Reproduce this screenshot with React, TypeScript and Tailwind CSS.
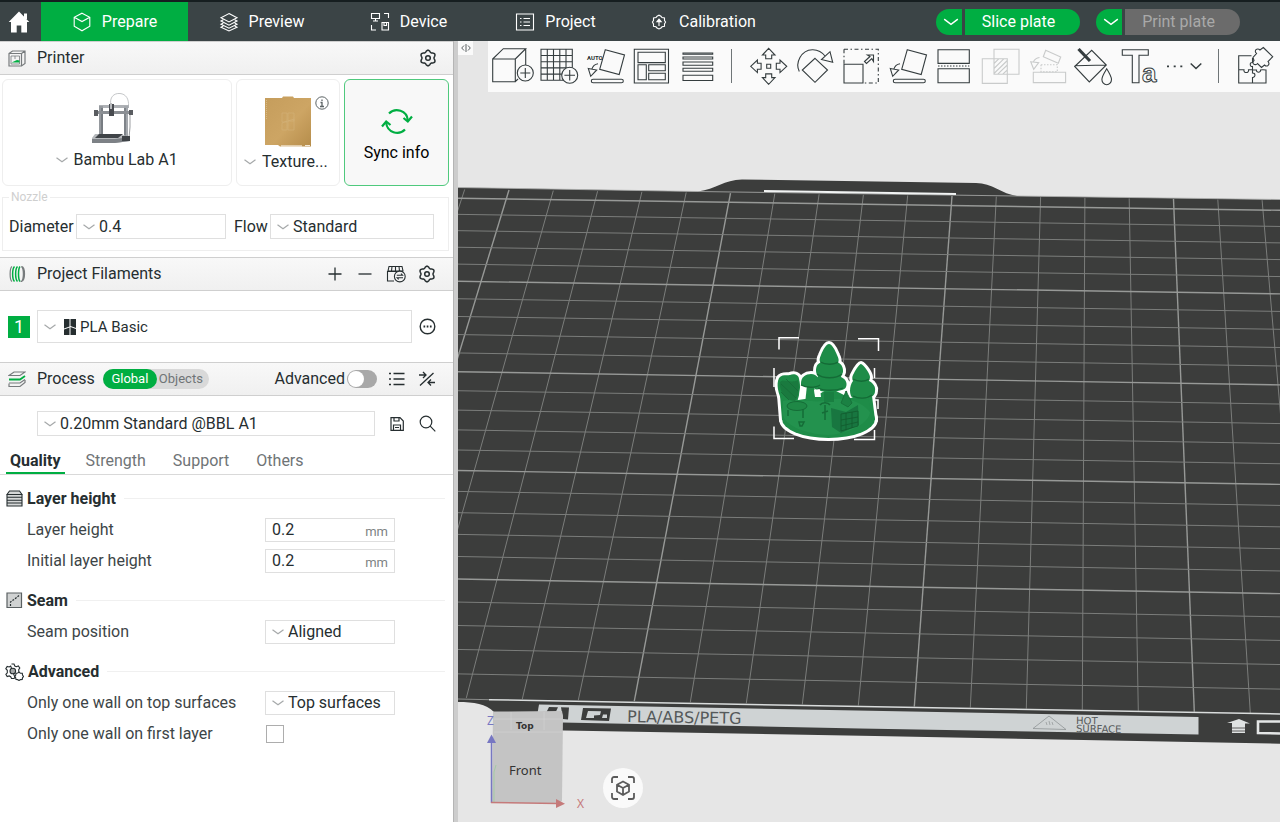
import type { ReactNode } from 'react';

const INK = '#262e30';

function Chevron({ className = 'text-[#a6a9aa]' }: { className?: string }) {
  return (
    <svg width="12" height="6" viewBox="0 0 12 6" fill="none" stroke="currentColor" className={`shrink-0 ${className}`}>
      <path d="M.5 .7 6 4.8 11.5 .7" strokeWidth="1.2" />
    </svg>
  );
}

// Drop-down with the arrow on the left side of its value.
function Dropdown({ id, value, className, icon, small }: { id: string; value: string; className: string; icon?: ReactNode; small?: boolean }) {
  return (
    <div className={`flex items-center gap-1 border border-[#dfdfdf] bg-white pl-1.5 ${className}`}>
      <Chevron />
      <div className="flex min-w-0 flex-1 items-center gap-1">
        {icon}
        <select id={id} aria-label={value} className={`min-w-0 flex-1 appearance-none bg-transparent outline-none ${small ? 'text-[15px]' : ''}`}>
          <option>{value}</option>
        </select>
      </div>
    </div>
  );
}

// Six-lobed gear outline.
const gearPoints = Array.from({ length: 72 }, (_, i) => {
  const a = (i * Math.PI) / 36;
  const r = 6.9 - 0.9 * Math.cos(6 * a);
  return `${(9 + r * Math.cos(a)).toFixed(2)},${(9 + r * Math.sin(a)).toFixed(2)}`;
}).join(' ');

function GearIcon() {
  return (
    <svg width="18" height="18" viewBox="0 0 18 18" fill="none" stroke={INK} strokeWidth="1.5" strokeLinejoin="round">
      <polygon points={gearPoints} />
      <circle cx="9" cy="9" r="2.3" />
    </svg>
  );
}

function SectionHeader({ icon, title, children }: { icon: ReactNode; title: string; children?: ReactNode }) {
  return (
    <div className="flex h-[34px] items-center border-y border-[#cfcfcf] bg-gradient-to-b from-[#f8f8f8] to-[#f0f0f0] pl-2">
      <span className="w-[29px]">{icon}</span>
      <h2>{title}</h2>
      {children}
    </div>
  );
}

const navTabs = [
  {
    label: 'Prepare',
    icon: <path d="M10 1.2 17.8 5.3V14.3L10 18.8 2.2 14.3V5.3ZM2.2 5.3 10 9.6 17.8 5.3" />,
  },
  {
    label: 'Preview',
    icon: <path d="M10 1.5 18 5.7 10 9.9 2 5.7ZM4.3 7.8 2 9 10 13.2 18 9 15.7 7.8M4.3 11 2 12.2 10 16.2 18 12.2 15.7 11M4.3 14 2 15.2 10 19 18 15.2 15.7 14" />,
  },
  {
    label: 'Device',
    icon: <path d="M1.5 1.5H9.5V6.5H1.5ZM5.5 6.5V9M3 9H8M14 1.5H18.5V6M1.5 13V18H6M12 10.5H18.5V18H12ZM14 10.5V13.5H16.5V10.5" />,
  },
  {
    label: 'Project',
    icon: <path d="M1.5 2H18.5V18H1.5ZM5 6.5H6.5M8.5 6.5H15M5 10H6.5M8.5 10H15M5 13.5H6.5M8.5 13.5H15" />,
  },
  {
    label: 'Calibration',
    icon: (
      <>
        <path d="M8 4.3 10 3.2 12 4.3 13 5.5 15.5 6V8.5L16.6 10 15.5 12V14.3L13 14.8 12 16 10 17 8 16 7 14.8 4.5 14.3V12L3.4 10 4.5 8.5V6L7 5.5Z" />
        <path d="M10 14V8.5M7.8 9.8 10 7.2 12.2 9.8Z" fill="currentColor" />
      </>
    ),
  },
];

function TopBar() {
  return (
    <header className="flex h-[41px] items-stretch border-t-2 border-[#161e20] bg-[#3b4446] text-white">
      <button aria-label="Home" className="flex w-[41px] items-center justify-center pr-1">
        <svg width="22" height="22" viewBox="0 0 22 22" fill="currentColor">
          <path d="M11 .5 21.3 11H19V21.5H13.3V14.5H8.7V21.5H3V11H.7Z" />
          <path d="M16 2.5H19V8H16Z" />
        </svg>
      </button>
      <nav className="flex">
        {navTabs.map((tab, i) => (
          <button key={tab.label} className={`flex w-[147px] items-center justify-center gap-2.5 ${i === 0 ? 'bg-[#00ae42]' : ''}`}>
            <svg width="20" height="20" viewBox="0 0 20 20" fill="none" stroke="currentColor" strokeWidth="1.1">
              {tab.icon}
            </svg>
            {tab.label}
          </button>
        ))}
      </nav>
      <div className="ml-auto flex items-center gap-4 pr-10">
        <div className="flex gap-[3px]">
          <button aria-label="Slice options" className="flex h-[26px] w-[26px] items-center justify-center rounded-l-full bg-[#00ae42] pl-1">
            <Chevron className="scale-125 text-white" />
          </button>
          <button className="h-[26px] w-[115px] rounded-r-full bg-[#00ae42] pr-2">Slice plate</button>
        </div>
        <div className="flex gap-[3px]">
          <button aria-label="Print options" className="flex h-[26px] w-[26px] items-center justify-center rounded-l-full bg-[#00ae42] pl-1">
            <Chevron className="scale-125 text-white" />
          </button>
          <button className="h-[26px] w-[115px] rounded-r-full bg-[#6b6b6b] pr-2 text-[#a9a9a9]">Print plate</button>
        </div>
      </div>
    </header>
  );
}

function PrinterPicture() {
  return (
    <svg width="44" height="52" viewBox="0 0 44 52" fill="none">
      <path d="M20 14C18 5 23 1 29 1.500C35 2 38 7 37.500 14" stroke="#c5c7c9" />
      <path d="M39 18V35L38 46" stroke="#9b9ea1" />
      <path d="M8 13H38V16H8Z" fill="#aeb1b5" />
      <path d="M8 14H12V45H8Z" fill="#95999e" />
      <path d="M33 14H37V46H33Z" fill="#a4a8ad" />
      <path d="M11 16V45M34 16V46" stroke="#5b6066" />
      <path d="M5 19H41V22H5Z" fill="#8b8f94" />
      <path d="M3 18H7V24H3ZM38 18H42V23H38Z" fill="#5a5d61" />
      <path d="M18 12H23V24H18Z" fill="#484b50" />
      <path d="M19 11H21V17H19Z" fill="#b8babd" />
      <path d="M4 42H29L39 45V49L24 51H1V46Z" fill="#b6b9bc" />
      <path d="M1 47H24L39 45V49L24 51H1Z" fill="#7d8186" />
      <path d="M8 42H32L27 46H4Z" fill="#404448" />
      <path d="M31 44H39V49H31Z" fill="#3f4347" />
    </svg>
  );
}

function PlatePicture() {
  return (
    <svg width="48" height="52" viewBox="0 0 48 52" fill="none">
      <defs>
        <linearGradient id="gold" x1="0" y1="0" x2="1" y2="1">
          <stop offset="0" stopColor="#c59d5c" />
          <stop offset=".55" stopColor="#cda564" />
          <stop offset="1" stopColor="#b68d4b" />
        </linearGradient>
      </defs>
      <path d="M1 2H18L19 .500H29L30 2H47V50.500H16L14 49H1Z" fill="url(#gold)" />
      <path d="M17 50H38" stroke="#f4ead8" strokeWidth="1.300" />
      <path d="M41 49.500H46" stroke="#f4ead8" />
      <path d="M18 17H23V26H18ZM24 17H30V25H24ZM18 27 23 25V34H18ZM24 25 30 23V34H24Z" stroke="#d3b27a" strokeWidth=".6" />
      <path d="M2.500 4V24" stroke="#dcc08d" strokeWidth=".8" strokeDasharray="1 1" />
    </svg>
  );
}

function PrinterSection() {
  return (
    <section>
      <SectionHeader
        title="Printer"
        icon={
          <svg width="18" height="17" viewBox="0 0 18 17" fill="none" stroke="#777b7d" strokeWidth="1.2">
            <path d="M1 3.500 4.500 1H17V13.500L13.500 16H1ZM1 3.500H13.500V16M13.500 3.500 17 1" />
            <path d="M3 6H11.500V14H3ZM7 6V9" strokeWidth=".8" />
            <path d="M3.500 12.500 9 10 11.500 10.500V12.500Z" fill="#00ae42" stroke="none" />
          </svg>
        }
      >
        <button aria-label="Printer settings" className="ml-auto mr-4"><GearIcon /></button>
      </SectionHeader>
      <div className="flex gap-1 px-0.5 pt-1 pr-1">
        <div className="flex h-[107px] flex-1 flex-col items-center rounded-md border border-[#eee] pt-3">
          <div className="pr-2"><PrinterPicture /></div>
          <div className="flex items-center gap-1.5 pt-1.5">
            <Chevron />
            <select aria-label="Printer model" className="appearance-none bg-transparent outline-none">
              <option>Bambu Lab A1</option>
            </select>
          </div>
        </div>
        <div className="relative flex h-[107px] w-[104px] flex-col items-center rounded-md border border-[#eee] pt-4">
          <PlatePicture />
          <button aria-label="Plate information" className="absolute right-2.5 top-4">
            <svg width="14" height="14" viewBox="0 0 14 14" fill="none" stroke="#5c6365">
              <circle cx="7" cy="7" r="6.200" />
              <path d="M7 3.500V5M5.500 6.500H7V10.500M5 10.500H9" strokeWidth="1.300" />
            </svg>
          </button>
          <div className="flex items-center gap-1.5 pr-1 pt-1">
            <Chevron />
            <select aria-label="Plate type" className="appearance-none bg-transparent outline-none">
              <option>Texture...</option>
            </select>
          </div>
        </div>
        <button className="flex h-[107px] w-[105px] flex-col items-center rounded-md border border-[#4fc97d] bg-[#f8f8f8] pt-7 text-black">
          <svg width="32" height="27" viewBox="0 0 32 27" fill="none" stroke="#00ae42" strokeWidth="2.200">
            <path d="M8 5.500A11 11 0 0 1 26.800 12M24 21.500A11 11 0 0 1 5.200 15" />
            <path d="M22.500 10 26.800 13.500 31 8.500M1 18.500 5.200 13.500 9.500 17" />
          </svg>
          <span className="pt-2">Sync info</span>
        </button>
      </div>
      <fieldset className="ml-0.5 mr-1 mt-[5px] flex h-[60px] items-center border border-[#eee] pl-1.5">
        <legend className="px-0.5 text-[12px] leading-3 text-[#cfcfcf]">Nozzle</legend>
        <label htmlFor="diameter" className="w-[67px]">Diameter</label>
        <Dropdown id="diameter" value="0.4" className="h-[25px] w-[150px]" />
        <label htmlFor="flow" className="ml-2 w-[36px]">Flow</label>
        <Dropdown id="flow" value="Standard" className="h-[25px] w-[164px]" />
      </fieldset>
    </section>
  );
}

function FilamentSection() {
  return (
    <section className="pt-1.5">
      <SectionHeader
        title="Project Filaments"
        icon={
          <svg width="18" height="18" viewBox="0 0 18 18" fill="none" strokeWidth="1.200">
            <path d="M4 1.500C1.500 3 1.500 15 4 16.500M13.500 1.500C17.500 1.500 17.500 16.500 13.500 16.500C16 14 16 4 13.500 1.500" stroke="#777b7d" />
            <path d="M6.500 1.500C4 4 4 14 6.500 16.500M9.500 1.500C7 4 7 14 9.500 16.500M12 1.500C10 4 10 14 12 16.500" stroke="#00ae42" strokeWidth="1.500" />
          </svg>
        }
      >
        <div className="ml-auto mr-[17px] flex items-center gap-3.5">
          <button aria-label="Add filament">
            <svg width="14" height="14" viewBox="0 0 14 14" stroke={INK} strokeWidth="1.300"><path d="M7 .5V13.500M.5 7H13.500" /></svg>
          </button>
          <button aria-label="Remove filament" className="ml-0.5">
            <svg width="14" height="14" viewBox="0 0 14 14" stroke={INK} strokeWidth="1.300"><path d="M.5 7H13.500" /></svg>
          </button>
          <button aria-label="Sync filaments">
            <svg width="20" height="18" viewBox="0 0 20 18" fill="none" stroke={INK} strokeWidth="1.100">
              <path d="M3 1.500H16L17 6H2ZM6 1.500 5.500 6M9.500 1.500V6M13 1.500 13.500 6M1.500 6V16H8M1.500 6.500H17" />
              <circle cx="13.800" cy="11.500" r="5.400" fill="#f4f4f4" />
              <path d="M10.800 10.200H16.500L15 8.700M17 12.800H11.200L12.700 14.300" />
            </svg>
          </button>
          <button aria-label="Filament settings" className="-ml-0.5"><GearIcon /></button>
        </div>
      </SectionHeader>
      <div className="flex items-center pb-[19px] pl-2 pr-[17px] pt-[19px]">
        <button className="h-[22px] w-[22px] bg-[#00ae42] text-[18px] text-white">1</button>
        <Dropdown
          id="filament"
          value="PLA Basic"
          small
          className="ml-[7px] h-[33px] flex-1"
          icon={
            <svg width="12" height="16" viewBox="0 0 12 16" fill={INK} className="ml-1 shrink-0">
              <path d="M0 0H5.500V7.500L0 9.500ZM6.500 0H12V9L6.500 7ZM0 10.500 5.500 8.500V16H0ZM6.500 8 12 10V16H6.500Z" />
            </svg>
          }
        />
        <button aria-label="Filament options" className="ml-[7px]">
          <svg width="17" height="17" viewBox="0 0 17 17" fill="none" stroke={INK}>
            <circle cx="8.500" cy="8.500" r="7.300" strokeWidth="1.400" />
            <path d="M4.500 8.500H6.200M7.700 8.500H9.400M10.900 8.500H12.600" strokeWidth="1.800" />
          </svg>
        </button>
      </div>
    </section>
  );
}

function ProcessSection() {
  return (
    <section>
      <SectionHeader
        title="Process"
        icon={
          <svg width="18" height="17" viewBox="0 0 18 17" fill="none" stroke="#777b7d" strokeWidth="1.200">
            <path d="M1 4.500 6 1H17L12 4.500ZM1 12.500V15.500H12L17 11.500V9" />
            <path d="M1 8.500H12L17 5" stroke="#00ae42" strokeWidth="1.800" />
            <path d="M1 12H12L17 8.500" />
          </svg>
        }
      >
        <div className="ml-2 flex h-5 items-center rounded-full bg-[#d9d9d9] pr-1 text-[13px]">
          <button className="h-5 w-[54px] rounded-full bg-[#00ae42] text-white">Global</button>
          <button className="px-0.5 text-[#6f7476]">Objects</button>
        </div>
        <div className="ml-auto mr-[18px] flex items-center">
          <label htmlFor="advanced">Advanced</label>
          <input
            id="advanced"
            type="checkbox"
            role="switch"
            className="ml-0.5 h-[18px] w-[30px] appearance-none rounded-full bg-[#a8a8a8] p-px before:block before:h-4 before:w-4 before:rounded-full before:bg-white"
          />
          <button aria-label="Parameter list" className="ml-3">
            <svg width="16" height="14" viewBox="0 0 16 14" stroke={INK} strokeWidth="1.300">
              <path d="M0 1.500H2M4.500 1.500H15.500M0 7H2M4.500 7H15.500M0 12.500H2M4.500 12.500H15.500" />
            </svg>
          </button>
          <button aria-label="Compare presets" className="ml-3.5">
            <svg width="16" height="16" viewBox="0 0 16 16" fill="none" stroke={INK} strokeWidth="1.300">
              <path d="M1 14.500 14.500 2M0 4H6.500M4 1 7 4 4 7M16 11.500H9.500M12 8.500 9 11.500 12 14.500" />
            </svg>
          </button>
        </div>
      </SectionHeader>
      <div className="flex items-center pl-[37px] pr-[17px] pt-[15px]">
        <Dropdown id="preset" value="0.20mm Standard @BBL A1" className="h-[25px] flex-1" />
        <button aria-label="Save preset" className="ml-[15px]">
          <svg width="14" height="14" viewBox="0 0 14 14" fill="none" stroke={INK} strokeWidth="1.200">
            <path d="M1 .7H10L13.300 4V13.300H1ZM4 .7V4H9V.7M3.500 13V8H10.500V13M5 10.500H9" />
          </svg>
        </button>
        <button aria-label="Search" className="ml-[15px]">
          <svg width="17" height="17" viewBox="0 0 17 17" fill="none" stroke={INK} strokeWidth="1.200">
            <circle cx="7" cy="7" r="5.800" />
            <path d="M11.200 11.200 16.300 16.300" />
          </svg>
        </button>
      </div>
      <nav className="mt-2.5 flex h-[29px] gap-[21px] border-b border-[#d9d9d9] pl-1.5 text-[#6f7476]">
        <button className="border-b-2 border-[#00ae42] px-1 pt-1 font-bold text-[#262e30]">Quality</button>
        <button className="pt-0.5">Strength</button>
        <button className="ml-1.5 pt-0.5">Support</button>
        <button className="ml-1.5 pt-0.5">Others</button>
      </nav>
    </section>
  );
}

function OptionGroup({ title, icon, children }: { title: string; icon: ReactNode; children: ReactNode }) {
  return (
    <section>
      <div className="flex h-[31px] items-center gap-1">
        {icon}
        <h3 className="font-bold">{title}</h3>
        <hr className="ml-1 flex-1 border-[#f0f0f0]" />
      </div>
      {children}
    </section>
  );
}

function OptionRow({ id, label, children }: { id: string; label: string; children: ReactNode }) {
  return (
    <div className="flex h-[31px] items-center pl-[21px]">
      <label htmlFor={id} className="w-[238px] text-[#3d4547]">{label}</label>
      {children}
    </div>
  );
}

function LengthField({ id }: { id: string }) {
  return (
    <div className="flex h-6 w-[130px] items-center border border-[#dfdfdf] px-1.5">
      <input id={id} defaultValue="0.2" className="w-0 min-w-0 flex-1 outline-none" />
      <span className="pt-1 text-[13px] text-[#7d8284]">mm</span>
    </div>
  );
}

function QualityOptions() {
  return (
    <div className="flex flex-col gap-[9px] pl-1.5 pr-2 pt-2">
      <OptionGroup
        title="Layer height"
        icon={
          <svg width="17" height="17" viewBox="0 0 17 17" fill="#d5d7d7" stroke={INK} strokeWidth="1.100">
            <path d="M3.500 1H13.500L16 4.500H1ZM1 4.500H16V7.300H1ZM1 7.300H16V10.200H1ZM1 10.200H16V13H1ZM1 13H16V16H1Z" />
          </svg>
        }
      >
        <OptionRow id="layer" label="Layer height"><LengthField id="layer" /></OptionRow>
        <OptionRow id="initial" label="Initial layer height"><LengthField id="initial" /></OptionRow>
      </OptionGroup>
      <OptionGroup
        title="Seam"
        icon={
          <svg width="17" height="17" viewBox="0 0 17 17" fill="#d0d2d2" stroke="#5a6062" strokeWidth="1.200">
            <path d="M1 1H15.500V15.500H1Z" />
            <path d="M4.500 14V10L8 7.500 13 3.500" fill="none" stroke={INK} strokeDasharray="2 1.200" />
          </svg>
        }
      >
        <OptionRow id="seam" label="Seam position"><Dropdown id="seam" value="Aligned" className="h-6 w-[130px]" /></OptionRow>
      </OptionGroup>
      <OptionGroup
        title="Advanced"
        icon={
          <svg width="19" height="18" viewBox="0 0 19 18" fill="none" stroke={INK} strokeWidth="1.100" className="-ml-px">
            <path d="M6.500 1H9L9.800 3 11.300 3.700 13.300 3 14.800 5 13.700 6.700V8.300L14.500 9.500M10 14.500 9 15.500H6.500L5.700 13.700 4.200 12.900 2.200 13.500 .9 11.300 2.300 9.800V7.300L.8 5.700 2.200 3.500 4.200 4 5.700 3Z" />
            <circle cx="7.800" cy="8" r="2.800" fill="#a5a8a9" />
            <path d="M12.500 10 14 9.300 15.500 10.200 17.300 10.300 17.500 12 18.500 13.500 17.500 14.800 17.200 16.500 15.500 16.600 14 17.500 12.500 16.600 10.900 16.300 10.700 14.700 9.800 13.300 10.800 12 10.900 10.400Z" fill="#fff" />
          </svg>
        }
      >
        <OptionRow id="top-wall" label="Only one wall on top surfaces">
          <Dropdown id="top-wall" value="Top surfaces" className="h-6 w-[130px]" />
        </OptionRow>
        <OptionRow id="first-wall" label="Only one wall on first layer">
          <input id="first-wall" type="checkbox" className="ml-px h-[18px] w-[18px] appearance-none border border-[#adadad] bg-white" />
        </OptionRow>
      </OptionGroup>
    </div>
  );
}

const cubeAdd = (
  <>
    <path d="M1.700 13H24.300V35.700H1.700ZM1.700 13 12.300 2.700H34.700L24.300 13M34.700 2.700V19M24.300 35.700 27 33" />
    <circle cx="34.300" cy="27" r="8" />
    <path d="M34.300 22V32M29.300 27H39.300" />
  </>
);

const gridAdd = (
  <>
    <path d="M4 3.300H35.300V34.300H4ZM10.300 3.300V34.300M16.500 3.300V34.300M22.800 3.300V34.300M29 3.300V34.300M4 9.500H35.300M4 15.700H35.300M4 21.900H35.300M4 28.100H35.300" />
    <circle cx="32.700" cy="29.300" r="8" fill="#fafafa" />
    <path d="M32.700 24V34.600M27.400 29.300H38" />
  </>
);

const layFlat = (
  <>
    <path d="M22.300 3.700 41.500 9 36.200 28.500 16.700 23.300Z" />
    <rect x="8.300" y="33.200" width="32" height="3.600" rx="1.800" />
    <path d="M5.300 22.500 13.700 24 7.700 30.300ZM9 22.800C9.700 20.500 11.500 18.500 15 17.800" />
  </>
);

const arrowUp = 'M21.700 2.300 28 9H24.700V12.700H18.700V9H15.400Z';

const leftTools = [
  { name: 'Add model', art: cubeAdd },
  { name: 'Add plate', art: gridAdd },
  {
    name: 'Auto orient',
    art: (
      <>
        {layFlat}
        <text x="4" y="13.500" fontSize="6" fontWeight="700" fill={INK} stroke="none">AUTO</text>
      </>
    ),
  },
  {
    name: 'Arrange',
    art: <path d="M5.300 3.300H39.500V37H5.300ZM9 6.300H36.300V16.600H9ZM9 18.700H17.300V33.700H9ZM19.700 18.700H36.300V24.700H19.700ZM19.700 27.300H36.300V33.700H19.700Z" />,
  },
  {
    name: 'Variable layer height',
    art: <path d="M8 7H37.700V8.200H8ZM8 11H37.700V13H8ZM8 16H37.700V19.300H8ZM8 22.300H37.700V25.300H8ZM8 29.300H37.700V34.500H8Z" />,
  },
];

const rightTools = [
  {
    name: 'Move',
    art: (
      <>
        <path d="M19.700 18.300H23.700V22.300H19.700Z" />
        <path d={arrowUp} />
        <path d={arrowUp} transform="rotate(90 21.700 20.300)" />
        <path d={arrowUp} transform="rotate(180 21.700 20.300)" />
        <path d={arrowUp} transform="rotate(270 21.700 20.300)" />
      </>
    ),
  },
  {
    name: 'Rotate',
    art: <path d="M22 12.300 34.500 24 22 36.300 9.300 24ZM6.300 25.500C2 17 8 4 19.300 3.700C25 3.500 29.500 6.500 32.500 10.500M28.500 13.500 39.700 16.300 37 5.700Z" />,
  },
  {
    name: 'Scale',
    art: (
      <>
        <path d="M5 3.300H39.300V37H24M5 3.300V18" strokeDasharray="4 2.500 1.500 2.500" />
        <path d="M5 18.300H24V37H5ZM25.500 15.500 31 10.500 28.500 9H34.500V15.500L32.800 12.700 27.500 17.500Z" />
      </>
    ),
  },
  { name: 'Place on face', art: layFlat },
  {
    name: 'Cut',
    art: (
      <>
        <path d="M7 3.700H38.300V17.400H7ZM7 22.700H38.300V36.700H7Z" />
        <path d="M7 20H38.300" strokeDasharray="1.500 1.500" />
      </>
    ),
  },
  {
    name: 'Mesh boolean',
    off: true,
    art: <path d="M5.300 12.700H30.300V37.400H5.300ZM17 3.300H42V28.300H17ZM17 17.500 22 12.700M17 22.500 27 12.700M17 27.500 30.300 14.500M20.500 28.300 30.300 19M25.500 28.300 30.300 24" />,
  },
  {
    name: 'Supports',
    off: true,
    art: (
      <>
        <path d="M10.300 26.300H42.600V36.600H10.300ZM22.700 4.300 37.700 11 35.300 17.300 20.300 10.700ZM7.700 15.700 15.700 16.700 10.700 23.300ZM10.500 15.700C11.500 13.500 13.500 12 16.500 11.500" />
        <path d="M18 18.700H34.300V25.700H18Z" strokeDasharray="1.500 1.500" />
      </>
    ),
  },
  {
    name: 'Color painting',
    art: (
      <>
        <path d="M5.700 20.500 22.700 4.300 37.300 19 20.300 36ZM5.700 19.800 37.300 19M37.700 22.700C34.500 28 32.900 30.500 32.900 33.500A4.800 5.200 0 0 0 42.500 33.500C42.500 30.500 41 28 37.700 22.700Z" />
        <path d="M9.500 3 21 15" strokeWidth="3.200" />
      </>
    ),
  },
  {
    name: 'Text',
    art: (
      <>
        <path d="M7.300 3.700H33.300V9.300H24V36.700H17.300V9.300H7.300Z" />
        <text x="27" y="36" fontSize="26" fontWeight="700" strokeWidth="1" fontFamily="Liberation Sans">a</text>
      </>
    ),
  },
  {
    name: 'More tools',
    art: (
      <>
        <path d="M6 20.300H8M12.700 20.300H14.700M19.300 20.300H21.300" strokeWidth="1.800" />
        <path d="M29.700 17.500 35 22.500 40.300 17.500" strokeWidth="1.500" />
      </>
    ),
  },
];

function Tool({ name, art, off }: { name: string; art: ReactNode; off?: boolean }) {
  return (
    <button aria-label={name} disabled={off} className={`flex w-[46px] justify-center ${off ? 'text-[#c9cbcb]' : 'text-[#353d3f]'}`}>
      <svg width="44" height="42" viewBox="0 -1 44 42" fill="none" stroke="currentColor" strokeWidth="1.100" className="overflow-visible">
        {art}
      </svg>
    </button>
  );
}

function Toolbar() {
  return (
    <div className="relative flex items-start">
      <button aria-label="Collapse sidebar" className="flex h-[14px] w-[15px] items-center justify-center bg-[#fafafa]">
        <svg width="10" height="8" viewBox="0 0 10 8" fill="none" stroke="#5a6062">
          <path d="M3 1.500 .7 4 3 6.500M5 0V8M7 1.500 9.300 4 7 6.500" />
        </svg>
      </button>
      <div className="ml-[15px] flex h-[51px] flex-1 items-center bg-[#fafafa] pb-px pl-0.5">
        {leftTools.map((t) => <Tool key={t.name} {...t} />)}
        <span className="ml-[11px] mr-[14px] h-[34px] w-px shrink-0 bg-[#6f7577]" />
        {rightTools.map((t) => <Tool key={t.name} {...t} />)}
        <span className="ml-3 mr-[13px] h-[34px] w-px shrink-0 bg-[#6f7577]" />
        <Tool
          name="Assembly"
          art={
            <>
              <path d="M18.500 9.700H5.700V37H33V24C30 23.500 29 23.500 27.500 24C28 27 23 27 23.500 24H19.500V20.500C16.500 21 16.500 16 19.500 16.500V12M5.700 23.700H11C10 27.500 16.500 27.500 15.500 23.700H19.500V27C22.500 26.500 23 31.500 19.500 31.500V37" />
              <path d="M30.300 1.500 39.700 10.700 35 15.500C37.500 18.500 34 21.500 31.500 19L28.500 21.500 24.500 17.500C22 20.500 18 17 21 14.500L20 11.300 23.500 7.500C20.500 5 24 1 27 4Z" />
            </>
          }
        />
      </div>
    </div>
  );
}

// Bed grid: each line is kept as its two end points after perspective.
const columns = Array.from({ length: 22 }, (_, k) => {
  const i = k - 13;
  const top = 952 + 44.3 * i;
  const bottom = 914.3 + 56 * i;
  return { x1: top, y1: 196 + (top - 952) * 0.0135, x2: bottom, y2: 706.5 + (bottom - 914) * 0.019, major: i % 5 === 0 };
});

const rows = Array.from({ length: 25 }, (_, n) => {
  const depth = 1 - 0.0082 * n;
  return { y1: (198.3 + 14.29 * n) / depth, y2: (210.3 + 14.3 * n) / depth, major: n % 5 === 0 };
});

function ModelShape() {
  return (
    <>
      <ellipse cx="828.500" cy="419" rx="46.500" ry="19" />
      <path d="M780 395 798 400 812 398 830 388 850 398 872 396 875 420H782Z" />
      <path d="M829 344C832 344 835 350 837 355C839 359 839 361 838 362.500C842 364 843.500 369 843 372C842 375 841 376 841 377C846 379 848 384 845.500 388C840 393 818 393 814 388C812 384 813 379 818 377C818 376 816 374 816 371C816 367 817 364 820.500 362.500C819 361 819.500 358 821 355C823 350 826 344 829 344Z" />
      <path d="M779 378C782 374 787 376 790 375C794 373 799 375 799 379C801 386 800 394 797 402H783C778 394 776 384 779 378Z" />
      <path d="M801 383C801 377 806 374 811 374C817 374 821 380 820 385C816 388 806 388 801 385Z" />
      <path d="M807 385H814L816 404H805Z" />
      <path d="M861 364C864 365 870 374 870 377C870 379 869 380 869 381C873 383 876 387 875 391C875 395 872 397 868 398C869 403 871 409 869 415H852L853 398C849 396 849 386 853 381C852 379 852 377 853 375C855 371 859 364 861 364Z" />
    </>
  );
}

function BedScene() {
  return (
    <svg className="absolute inset-0 h-full w-full" viewBox="458 41 822 781" preserveAspectRatio="xMinYMin slice" fill="none">
      <path d="M458 187.500 698 191.500C716 189 724 180 742 179.500L976 183C992 183 1002 194 1017 196L1280 199.500V743.700L875 736 536 730 494 712C486 704 474 702 458 702Z" fill="#3c3d3c" />
      <path d="M458 187.500 698 191.500 1017 196 1280 199.500" stroke="#aeb0ae" strokeWidth=".8" />
      <path d="M764 191 956 194" stroke="#f2f4f4" strokeWidth="2" />
      {columns.map((c) => (
        <line key={c.x1} x1={c.x1} y1={c.y1} x2={c.x2} y2={c.y2} stroke={c.major ? '#979997' : '#7b7d7b'} strokeWidth={c.major ? 1.4 : 1} />
      ))}
      {rows.map((r) => (
        <line key={r.y1} x1="458" y1={r.y1} x2="1280" y2={r.y2} stroke={r.major ? '#979997' : '#7b7d7b'} strokeWidth={r.major ? 1.4 : 1} />
      ))}
      <path d="M458 699 489 699.700" stroke="#8b8d8b" />
      <path d="M489 699.700 1280 714" stroke="#d9dcdc" strokeWidth="1.500" />

      {/* Printed strip along the front edge */}
      <path d="M539 704.500 1198.500 717V734.500L860 728.500 536 722Z" fill="#cfd3d4" />
      <path d="M549 707 558 707.300 556 711.500 546 713ZM561 707.300 569 707.500 568 719.500 563 719Z" fill="#3c3d3c" />
      <path d="M583 708 611 708.500 609 721 581 720Z" fill="#3c3d3c" />
      <path d="M588 711 601 711.300 600 715 594 715.500V718H586ZM603 714.500H607V718H602Z" fill="#cfd3d4" />
      <text x="627" y="722" fontSize="16" fill="#55595a" fontFamily="DejaVu Sans" transform="rotate(1 627 722)">PLA/ABS/PETG</text>
      <path d="M1049 716 1066 729.500 1033 728.500Z" stroke="#8f9495" strokeWidth=".8" />
      <path d="M1046 722 1047 725M1049 721 1050 725M1052 722 1053 725" stroke="#8f9495" strokeWidth=".7" />
      <g fontFamily="DejaVu Sans" fontSize="10" fill="#55595a">
        <text x="1076" y="724" transform="rotate(1 1076 724)">HOT</text>
        <text x="1076" y="732" transform="rotate(1 1076 732)">SURFACE</text>
      </g>
      <path d="M1239 719 1250 723.500H1245V733H1232V723H1227Z" fill="#dfe2e2" />
      <path d="M1231 728H1246M1231 731H1246" stroke="#3c3d3c" strokeWidth=".8" />
      <path d="M1280 721.500H1258V733L1280 733.500" stroke="#e4e6e6" strokeWidth="2.600" />

      {/* Selected model */}
      <g fill="#fff" stroke="#fff" strokeWidth="6" strokeLinejoin="round"><ModelShape /></g>
      <g fill="#1e8c48"><ModelShape /></g>
      <path d="M800 388 805 387 806 393 803 397H799ZM814 390 820 389 821 397H815Z" fill="#fff" />
      <path d="M783 401C800 398 815 404 828 400C846 396 862 402 870 412C870 422 850 434 828 435C804 434 785 425 783 415Z" fill="#23924e" />
      <path d="M820.500 362C825 365 834 365 838 362M817 374C823 379 836 379 842 374M818 388C824 391 836 391 843 388M853 379C858 382 865 382 869 379M853 396C858 399 867 399 872 395M801 385C806 388 816 388 820 385" stroke="#146b36" strokeWidth="1.300" />
      <path d="M780 382C784 378 790 384 798 380C800 388 798 398 795 401C786 401 779 392 780 382Z" fill="#1a7a3f" />
      <path d="M781 384 796 398M786 379 798 391M781 392 789 400" stroke="#166b37" strokeWidth=".8" />
      <path d="M824 392H834V402H824Z" fill="#197f41" />
      <ellipse cx="797" cy="406" rx="10" ry="4.500" fill="#1f8846" stroke="#156c37" />
      <path d="M788 410V416M803 409V418M799 422H804L802 426H800Z" stroke="#156c37" strokeWidth="1.500" />
      <path d="M831 408 846 412 858 405 859 425 841 433 832 427Z" fill="#187640" />
      <path d="M841 414 858 411V426L841 431ZM846 413V430M852 412V428M841 420 858 417M841 426 858 422" stroke="#125a2d" strokeWidth=".8" />
      <path d="M841 403 846 391 852 403 848 407Z" fill="#1b8143" stroke="#156c37" strokeWidth=".8" />
      <path d="M820 405C822 402 828 402 830 405M825 405V420M822 413 828 411" stroke="#156c37" strokeWidth="1.500" />
      <path d="M799 337.700H779V349.500M858 338.700H878.500V351M774 426.500V438.500H794M854 439.500H874.500V430M774 387V368M875 400H878V409M874.500 378V368" stroke="#fff" strokeWidth="1.500" />

      {/* View cube with its axes */}
      <path d="M493 711.500 562 711 563 716 562 801 558 803H492Z" fill="#c4c4c4" />
      <path d="M511 712V730M544 712V730M494 719H562M494 732H562" stroke="#d2d2d2" strokeWidth=".7" />
      <text x="516" y="729" fontSize="9" fontWeight="600" fill="#333" fontFamily="DejaVu Sans">Top</text>
      <text x="509" y="775" fontSize="13" fill="#333" fontFamily="Noto Sans">Front</text>
      <path d="M494 802V772L496 765" stroke="#a4cba4" />
      <path d="M491.500 803V740" stroke="#7777c2" strokeWidth="1.500" />
      <path d="M491.500 734.500 496 743H487Z" fill="#7777c2" />
      <path d="M491 802.500 558 803.500" stroke="#c57a7a" strokeWidth="1.500" />
      <path d="M565 803.700 556 799V808Z" fill="#c57a7a" />
      <text x="487" y="725" fontSize="12" fill="#7777c2" fontFamily="Noto Sans">Z</text>
      <text x="577" y="808" fontSize="12" fill="#c57a7a" fontFamily="Noto Sans">X</text>
    </svg>
  );
}

export default function App() {
  return (
    <div className="flex h-screen flex-col overflow-hidden font-['Roboto','Noto_Sans',sans-serif] text-[16px] leading-5 text-[#262e30]">
      <TopBar />
      <div className="flex min-h-0 flex-1">
        <aside className="w-[453px] shrink-0 overflow-hidden bg-white">
          <PrinterSection />
          <FilamentSection />
          <ProcessSection />
          <QualityOptions />
        </aside>
        <div className="w-[5px] shrink-0 border-l border-[#b5b5b5] bg-[#cdcdcd]" />
        <main className="relative min-w-0 flex-1 overflow-hidden bg-[#e6e6e6]">
          <BedScene />
          <Toolbar />
          <button aria-label="Fit view" className="absolute bottom-3.5 left-[145px] flex h-10 w-10 items-center justify-center rounded-full bg-[#fafafa]">
            <svg width="24" height="24" viewBox="0 0 24 24" fill="none" stroke="#5b5b5b" strokeWidth="1.800" strokeLinejoin="round">
              <path d="M1 7V3A2 2 0 0 1 3 1H7M17 1H21A2 2 0 0 1 23 3V7M23 17V21A2 2 0 0 1 21 23H17M7 23H3A2 2 0 0 1 1 21V17" />
              <path d="M12 5.500 18 8.700V15.500L12 19 6 15.500V8.700ZM6 8.700 12 12 18 8.700M12 12V19" />
            </svg>
          </button>
        </main>
      </div>
    </div>
  );
}
